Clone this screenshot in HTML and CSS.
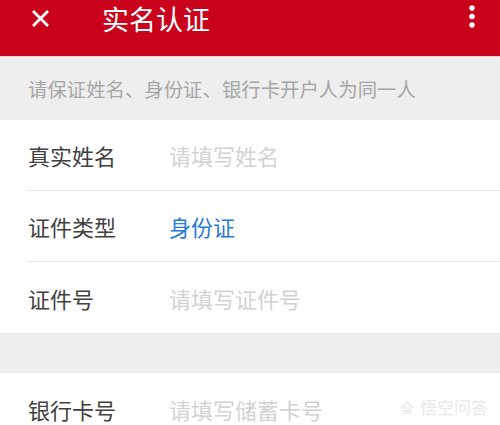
FILE: index.html
```html
<!DOCTYPE html>
<html lang="zh-CN">
<head>
<meta charset="utf-8">
<title>实名认证</title>
<link rel="stylesheet" href="styles.css">
</head>
<body>
<div class="page">
  <header class="topbar">
    <svg class="close" width="17" height="17" viewBox="0 0 17 17">
      <path d="M2 2 L15 15 M15 2 L2 15" stroke="#fff" stroke-width="2.8" stroke-linecap="square" fill="none"/>
    </svg>
    <h1 class="title">实名认证</h1>
    <svg class="more" width="8" height="26" viewBox="0 0 8 26">
      <circle cx="4" cy="4" r="2.7" fill="#fff"/>
      <circle cx="4" cy="12.5" r="2.7" fill="#fff"/>
      <circle cx="4" cy="21" r="2.7" fill="#fff"/>
    </svg>
  </header>
  <div class="notice">请保证姓名、身份证、银行卡开户人为同一人</div>
  <section class="group">
    <div class="row">
      <span class="label">真实姓名</span>
      <span class="placeholder">请填写姓名</span>
    </div>
    <div class="row">
      <span class="label">证件类型</span>
      <span class="value">身份证</span>
    </div>
    <div class="row last">
      <span class="label">证件号</span>
      <span class="placeholder">请填写证件号</span>
    </div>
  </section>
  <div class="spacer"></div>
  <section class="group">
    <div class="row last">
      <span class="label">银行卡号</span>
      <span class="placeholder">请填写储蓄卡号</span>
    </div>
  </section>
  <div class="watermark">
    <svg width="14" height="13" viewBox="0 0 14 13">
      <path d="M1 7 L7 1 L13 7 M3 7 H11 M2 10 H12 M3 12.5 H11" stroke="#e8e8e8" stroke-width="1.4" fill="none"/>
    </svg>
    <span>悟空问答</span>
  </div>
</div>
</body>
</html>
```

FILE: styles.css
```css
html, body {
  margin: 0;
  padding: 0;
  background: #ffffff;
}
body {
  font-family: "Noto Sans CJK SC", "Noto Sans", sans-serif;
}
.page {
  position: relative;
  width: 500px;
  height: 425px;
  overflow: hidden;
}
.topbar {
  background: #c8031b;
  border-bottom: 1px solid #f3c9cd;
  display: flex;
  align-items: flex-start;
  box-sizing: border-box;
  height: 57px;
}
.close {
  margin: 10px 0 0 32px;
  flex: none;
}
.title {
  margin: 0 0 0 53px;
  font-size: 27px;
  font-weight: normal;
  line-height: 38px;
  color: #ffffff;
  flex: 1;
}
.more {
  margin: 4px 24px 0 0;
  flex: none;
}
.notice {
  height: 63px;
  background: #eeeeee;
  color: #a6a6a6;
  font-size: 19.4px;
  line-height: 63px;
  padding-left: 28px;
}
.group {
  background: #ffffff;
}
.row {
  display: flex;
  align-items: center;
  height: 70px;
  margin-left: 27px;
  border-bottom: 1px solid #e6e6e6;
  font-size: 22px;
}
.row.last {
  border-bottom: none;
  height: 71px;
}
.label {
  width: 141px;
  padding-left: 1px;
  color: #404040;
}
.placeholder {
  color: #d2d2d2;
}
.value {
  color: #2a7bd2;
}
.spacer {
  height: 40px;
  background: #eeeeee;
}
.watermark {
  position: absolute;
  left: 400px;
  top: 397px;
  display: flex;
  align-items: center;
  gap: 6px;
  color: #e8e8e8;
  font-size: 17px;
  line-height: 20px;
}
```
